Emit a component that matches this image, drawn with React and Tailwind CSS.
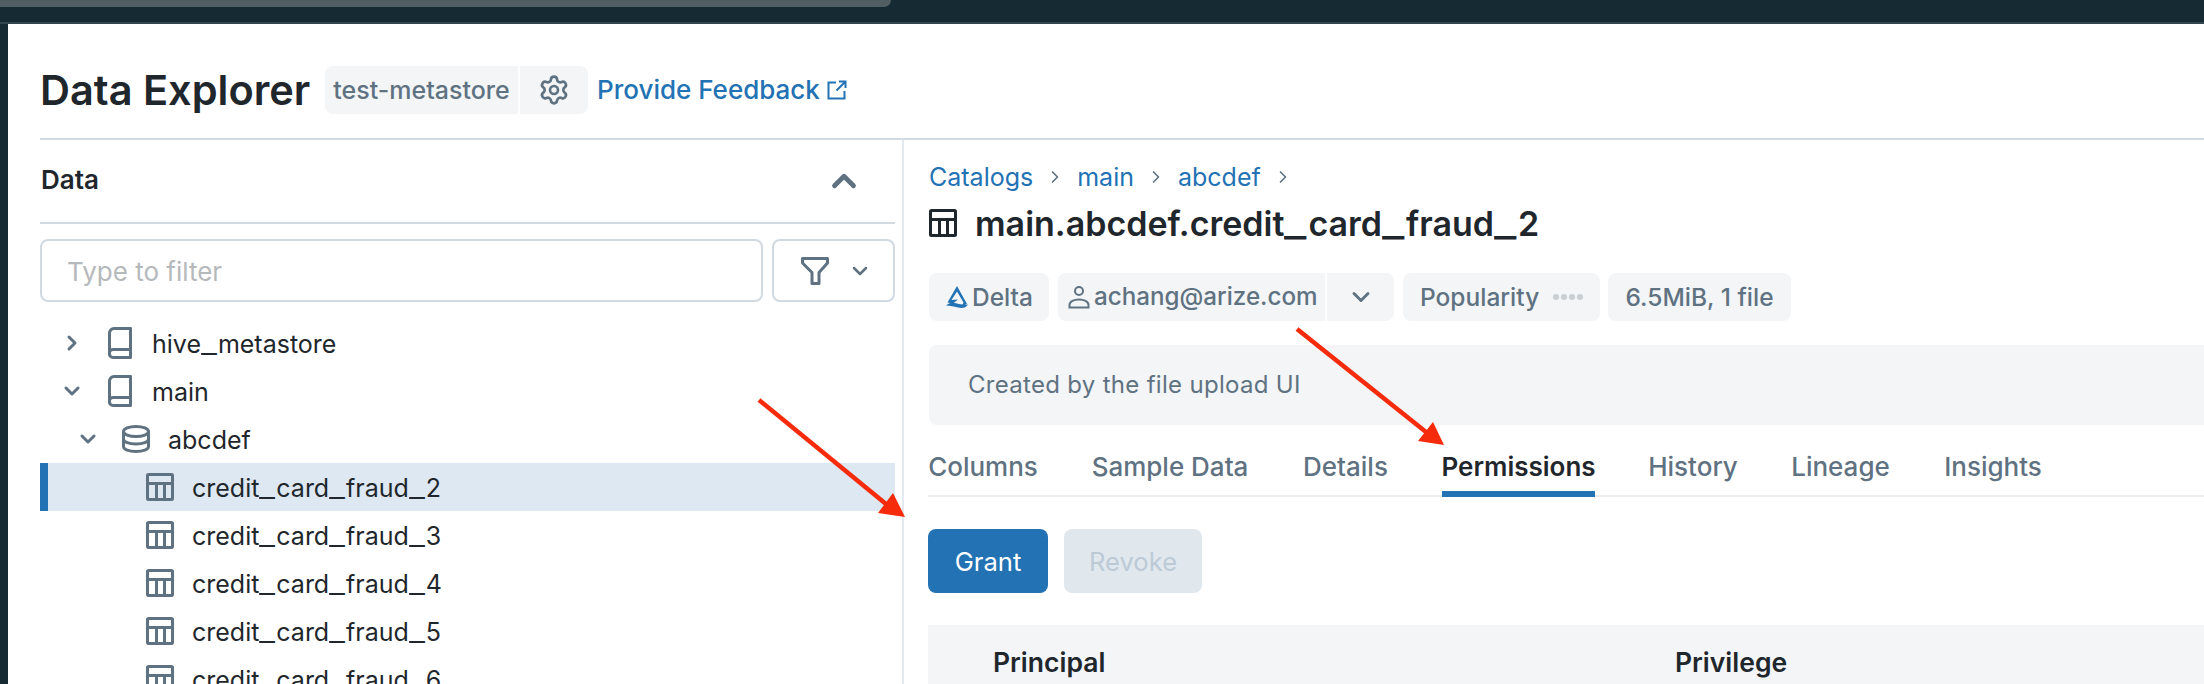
import React from "react";
import { Settings, ChevronRight, ChevronDown, ChevronUp } from "lucide-react";

const Book = () => (
  <svg width="24" height="32" viewBox="0 0 24 32" fill="none" stroke="#5f7281" strokeWidth="3" strokeLinejoin="round" strokeLinecap="round" className="shrink-0">
    <path d="M22.5 1.5H6A4.5 4.5 0 0 0 1.5 6V27" />
    <path d="M22.5 1.5V30.5H5A3.5 3.5 0 0 1 1.5 27V26A3.5 3.5 0 0 1 5 22.5H22.5" />
  </svg>
);
const Db = () => (
  <svg width="28" height="28" viewBox="0 0 28 28" fill="none" stroke="#5f7281" strokeWidth="3" className="shrink-0">
    <ellipse cx="14" cy="6.5" rx="12.5" ry="5" />
    <path d="M1.5 6.5V21.5C1.5 24.5 7 26.5 14 26.5S26.5 24.5 26.5 21.5V6.5" />
    <path d="M1.5 14C1.5 17 7 19 14 19S26.5 17 26.5 14" />
  </svg>
);
const TableIcon = ({ color = "#5f7281" }) => (
  <svg width="28" height="28" viewBox="0 0 28 28" fill="none" stroke={color} strokeWidth="3" className="shrink-0">
    <rect x="1.5" y="1.5" width="25" height="25" rx="1" />
    <path d="M1.5 10.5H26.5M10.5 10.5V26.5M18.5 10.5V26.5" />
  </svg>
);
const Delta = () => (
  <svg width="24" height="24" viewBox="0 0 24 24" className="shrink-0">
    <path d="M12 1L22 19L17 21L18.5 17.5L12 6.5L6.5 15L13 14.5L8 18.5L2.5 17.5Z" fill="#2272b4" />
    <path d="M1 20.5C5 17 9 17.5 12 18.5C15 19.5 19 20 23 19.5C21 23 17 23.5 13 22.5C9 21.5 5 20.5 1 20.5Z" fill="#2272b4" />
  </svg>
);
const Person = () => (
  <svg width="22" height="24" viewBox="0 0 22 24" fill="none" stroke="#5f7281" strokeWidth="2" className="shrink-0">
    <circle cx="11" cy="6" r="4" />
    <path d="M1.5 22.5V20C1.5 16.5 6 14.5 11 14.5S20.5 16.5 20.5 20V22.5Z" />
  </svg>
);
const External = () => (
  <svg width="20" height="20" viewBox="0 0 20 20" fill="none" stroke="#2272b4" strokeWidth="2" className="shrink-0">
    <path d="M9 2.5H1.5V18.5H17.5V11" />
    <path d="M12 1.5H18.5V8M18.5 1.5L9.5 10.5" />
  </svg>
);
const Funnel = () => (
  <svg width="28" height="28" viewBox="0 0 28 28" fill="none" stroke="#5f7281" strokeWidth="3" strokeLinejoin="round" className="shrink-0">
    <path d="M1.5 1.5H26.5V6L18 15.5V26.5H11V15.5L1.5 6Z" />
  </svg>
);

const Chip = ({ className = "", children }) => (
  <div className={`h-12 bg-[#f3f5f7] flex items-center text-[#5f7281] text-[24.5px] font-medium ${className}`}>{children}</div>
);

const Name = ({ text, wide = false }) => (
  <>
    {text.split("_").map((part, i) => (
      <React.Fragment key={i}>
        {i > 0 && (
          <span className={`inline-block origin-left scale-x-[1.4] ${wide ? "tracking-[8px]" : "tracking-[5.5px]"}`}>_</span>
        )}
        {part}
      </React.Fragment>
    ))}
  </>
);

const tables = [2, 3, 4, 5, 6];
const tabs = [
  ["Columns", "w-[110px] mr-[53px]"],
  ["Sample Data", "w-[158px] mr-[53px]"],
  ["Details", "w-[87px] mr-[53px]"],
  ["Permissions", "w-[153px] mr-[53px]"],
  ["History", "w-[90px] mr-[53px]"],
  ["Lineage", "w-[99px] mr-[53px]"],
  ["Insights", "w-[100px]"],
];

export default function App() {
  return (
    <div className="relative w-[2204px] h-[684px] overflow-hidden bg-[#152a33] text-[25px] leading-8 text-[#1f272d] font-['Inter','Liberation_Sans',sans-serif]">
      <div className="h-6 border-b-2 border-[#2f4650]">
        <div className="w-[891px] h-[7px] bg-[#505e64] rounded-br-lg" />
      </div>
      <div className="ml-2 h-[660px] bg-white pl-8 overflow-hidden">
        <header className="h-[116px] border-b-2 border-[#d1d9e1] flex items-center pt-[18px]">
          <h1 className="text-[41.5px] leading-[48px] font-semibold w-[285px] shrink-0 whitespace-nowrap">Data Explorer</h1>
          <Chip className="w-[193px] rounded-l-lg justify-center !text-[25px]">test-metastore</Chip>
          <Chip className="w-[68px] ml-[2px] rounded-r-lg justify-center">
            <Settings size={32} strokeWidth={2} color="#5f7281" />
          </Chip>
          <a className="ml-[9px] text-[26px] font-medium text-[#2272b4] flex items-center gap-[7px] whitespace-nowrap">
            Provide Feedback <External />
          </a>
        </header>
        <div className="flex h-[544px]">
          <aside className="w-[864px] shrink-0 border-r-2 border-[#e3e9ee]">
            <div className="w-[855px]">
              <div className="h-[84px] border-b-2 border-[#d1d9e1] flex items-center justify-between font-semibold text-[26px] pr-[32px]">
                <span className="pl-px -mt-[2px]">Data</span>
                <ChevronUp size={38} strokeWidth={3} color="#5f7281" />
              </div>
              <div className="flex gap-[9px] mt-[15px]">
                <div className="w-[723px] h-[63px] border-2 border-[#d1d9e1] rounded-lg flex items-center pl-[25px] pt-[2px] text-[26px] text-[#b5b9bc]">
                  Type to filter
                </div>
                <div className="w-[123px] h-[63px] border-2 border-[#d1d9e1] rounded-lg flex items-center pl-[27px] gap-[19px]">
                  <Funnel />
                  <ChevronDown size={24} strokeWidth={2.5} color="#5f7281" />
                </div>
              </div>
              <div className="mt-[17px]">
                <div className="h-12 flex items-center pl-[20px]">
                  <ChevronRight size={24} strokeWidth={3} color="#5f7281" className="mr-[24px]" />
                  <Book />
                  <span className="ml-[20px] pt-[2px]"><Name text="hive_metastore" /></span>
                </div>
                <div className="h-12 flex items-center pl-[20px]">
                  <ChevronDown size={24} strokeWidth={3} color="#5f7281" className="mr-[24px]" />
                  <Book />
                  <span className="ml-[20px] pt-[2px]">main</span>
                </div>
                <div className="h-12 flex items-center pl-[36px]">
                  <ChevronDown size={24} strokeWidth={3} color="#5f7281" className="mr-[22px]" />
                  <Db />
                  <span className="ml-[18px] pt-[2px]">abcdef</span>
                </div>
                {tables.map((n, i) => (
                  <div
                    key={n}
                    className={`h-12 flex items-center pl-[106px] ${i === 0 ? "bg-[#dee8f2] border-l-8 border-[#2272b4] !pl-[98px]" : ""}`}
                  >
                    <TableIcon />
                    <span className="ml-[18px] pt-[2px]"><Name text={`credit_card_fraud_${n}`} /></span>
                  </div>
                ))}
              </div>
            </div>
          </aside>
          <main className="flex-1 pl-[25px]">
            <nav className="mt-[19px] h-9 flex items-center text-[#2272b4]">
              <span>Catalogs</span>
              <ChevronRight size={20} strokeWidth={2} color="#5f7281" className="mx-[12px]" />
              <span>main</span>
              <ChevronRight size={20} strokeWidth={2} color="#5f7281" className="mx-[12px]" />
              <span>abcdef</span>
              <ChevronRight size={20} strokeWidth={2} color="#5f7281" className="mx-[12px]" />
            </nav>
            <div className="mt-[5px] h-[46px] flex items-center gap-[18px]">
              <TableIcon color="#1f272d" />
              <h2 className="text-[34px] leading-[46px] font-semibold pt-[2px]"><Name text="main.abcdef.credit_card_fraud_2" wide /></h2>
            </div>
            <div className="mt-[27px] flex">
              <Chip className="w-[120px] rounded-lg pl-[16px] gap-[3px]"><Delta />Delta</Chip>
              <Chip className="w-[267px] ml-[9px] rounded-l-lg pl-[10px] gap-[4px] !text-[24.2px]"><Person />achang@arize.com</Chip>
              <Chip className="w-[67px] ml-[2px] rounded-r-lg justify-center">
                <ChevronDown size={28} strokeWidth={2.5} color="#5f7281" />
              </Chip>
              <Chip className="w-[197px] ml-[9px] rounded-lg pl-[17px]">
                Popularity
                <span className="ml-[14px] flex gap-[2px]">
                  <i className="w-[6px] h-[6px] rounded-full bg-[#c9cfd3]" />
                  <i className="w-[6px] h-[6px] rounded-full bg-[#c9cfd3]" />
                  <i className="w-[6px] h-[6px] rounded-full bg-[#c9cfd3]" />
                  <i className="w-[6px] h-[6px] rounded-full bg-[#c9cfd3]" />
                </span>
              </Chip>
              <Chip className="w-[183px] ml-[8px] rounded-lg justify-center">6.5MiB, 1 file</Chip>
            </div>
            <div className="mt-6 h-20 bg-[#f3f5f7] rounded-l-lg flex items-center pl-[39px] text-[24px] tracking-[0.3px] text-[#5f7281]">
              Created by the file upload UI
            </div>
            <div className="mt-[24px] h-[48px] border-b-2 border-[#e8ecf0] flex items-start -ml-px font-medium text-[26px] text-[#5f7281]">
              {tabs.map(([t, cls]) => (
                <div
                  key={t}
                  className={`h-[48px] flex justify-center pt-[2px] shrink-0 whitespace-nowrap ${cls} ${t === "Permissions" ? "border-b-[6px] border-[#2272b4] text-[#1f272d] font-semibold" : ""}`}
                >
                  {t}
                </div>
              ))}
            </div>
            <div className="mt-8 flex gap-4 -ml-px text-[25.6px]">
              <button className="w-[120px] h-16 rounded-lg bg-[#2272b4] text-white pt-[1px]">Grant</button>
              <button className="w-[138px] h-16 rounded-lg bg-[#e0e8ee] text-[#bccad6] pt-[1px]">Revoke</button>
            </div>
            <div className="mt-8 -ml-px h-[60px] bg-[#f3f5f7] flex items-center font-semibold text-[26.5px] pt-[14px]">
              <span className="ml-[65px] w-[682px]">Principal</span>
              <span>Privilege</span>
            </div>
          </main>
        </div>
      </div>
      <svg className="absolute inset-0 pointer-events-none" width="2204" height="684" viewBox="0 0 2204 684" fill="#f52b0b" stroke="none">
        <path d="M759 400L886 504" stroke="#f52b0b" strokeWidth="4.5" />
        <path d="M893 493L905 517L878 513Z" />
        <path d="M1297 329L1426 432" stroke="#f52b0b" strokeWidth="4.5" />
        <path d="M1433 422L1444 445L1418 441Z" />
      </svg>
    </div>
  );
}
